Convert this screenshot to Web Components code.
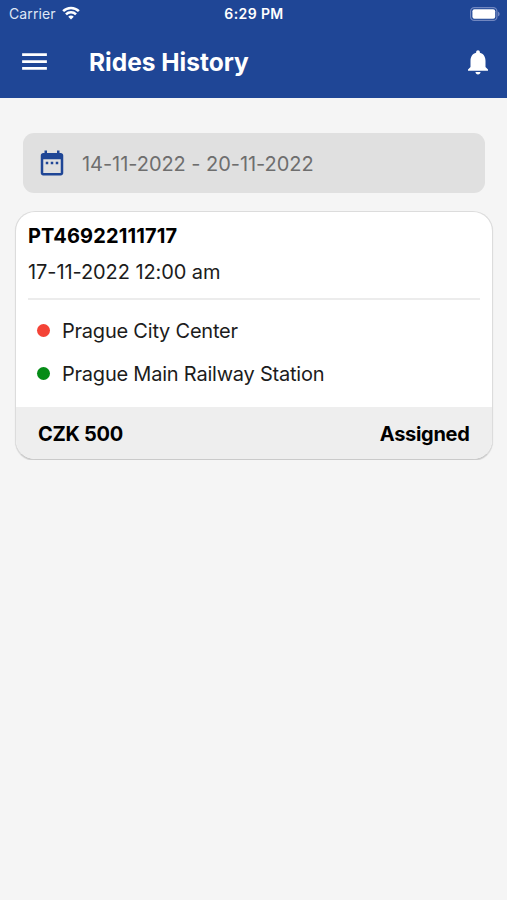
<!DOCTYPE html>
<html lang="en">
<head>
<meta charset="utf-8">
<meta name="viewport" content="width=device-width, initial-scale=1">
<title>Rides History</title>
<style>
	body {
		margin: 0;
		background: #f5f5f5;
		font-family: Inter, "Liberation Sans", sans-serif;
		color: #1c1c1c;
	}
	main {
		display: flex;
		flex-direction: column;
		gap: 18px;
		padding: 35px 14.5px 0 15px;
	}
</style>
</head>
<body>
	<status-bar time="6:29 PM">Carrier</status-bar>
	<app-bar>Rides History</app-bar>
	<main>
		<date-range>14-11-2022 - 20-11-2022</date-range>
		<ride-card>
			<span slot="number">PT46922111717</span>
			<span slot="date">17-11-2022 12:00 am</span>
			<ride-stop slot="stops" color="#f44336">Prague City Center</ride-stop>
			<ride-stop slot="stops" color="#058c17">Prague Main Railway Station</ride-stop>
			<span slot="price">CZK 500</span>
			<span slot="status">Assigned</span>
		</ride-card>
	</main>

<script>
(function() {
	function define(name, html, setup) {
		let template = document.createElement("template");
		template.innerHTML = html;

		customElements.define(name, class extends HTMLElement {
			constructor() {
				super();
				this._shadowRoot = this.attachShadow({mode: "open"});
				this._shadowRoot.appendChild(template.content.cloneNode(true));
				if (setup) {
					setup(this, this._shadowRoot);
				}
			}
		});
	}

	define("status-bar", `
		<style>
		:host {
			display: grid;
			grid-template-columns: 1fr auto 1fr;
			align-items: center;
			height: 27px;
			padding: 0 7px 0 9px;
			background: #1f4696;
			color: #fff;
			font-size: 14px;
			line-height: 27px;
		}
		.carrier {
			display: flex;
			align-items: center;
			gap: 6px;
			color: #dfe6f5;
			letter-spacing: 0.1px;
		}
		.time {
			margin-right: 1px;
			font-size: 14px;
			font-weight: 600;
			letter-spacing: 0.4px;
		}
		svg { display: block; }
		.carrier svg { margin-top: -1px; }
		.battery { justify-self: end; }
		</style>
		<div class="carrier">
			<slot></slot>
			<svg width="18" height="14" viewBox="0 0 19 14" fill="none" stroke="#fff" stroke-width="2.7">
				<path d="M1.2 5.1a11.8 11.8 0 0 1 16.6 0"/>
				<path d="M4.2 8.5a7.5 7.5 0 0 1 10.6 0"/>
				<path d="M9.5 13.9 6.6 11a4 4 0 0 1 5.8 0z" fill="#fff" stroke="none"/>
			</svg>
		</div>
		<span class="time"></span>
		<svg class="battery" width="30" height="14" viewBox="0 0 30 14">
			<rect x=".6" y=".6" width="26.3" height="12.8" rx="3.7" fill="none" stroke="#7187c0" stroke-width="1.2"/>
			<rect x="2.4" y="2.3" width="22.8" height="9.4" rx="2" fill="#fff"/>
			<path d="M28 4.7c2.2.7 2.2 3.9 0 4.6z" fill="#7187c0"/>
		</svg>
	`, (host, root) => {
		root.querySelector(".time").textContent = host.getAttribute("time");
	});

	define("app-bar", `
		<style>
		:host {
			display: flex;
			align-items: center;
			box-sizing: border-box;
			height: 71px;
			padding: 0 14.5px 2px 18px;
			background: #1f4696;
			color: #fff;
		}
		h1 {
			flex: 1;
			margin: 1px 0 0 38px;
			font-size: 24.5px;
			line-height: 32px;
			font-weight: 700;
		}
		svg { display: block; fill: #fff; }
		</style>
		<svg width="33" height="33" viewBox="0 0 24 24"><path d="M3 18h18v-2H3v2zm0-5h18v-2H3v2zm0-7v2h18V6H3z"/></svg>
		<h1><slot></slot></h1>
		<svg width="30" height="30" viewBox="0 0 24 24"><path d="M12 22c1.1 0 2-.9 2-2h-4c0 1.1.89 2 2 2zm6-6v-5c0-3.07-1.64-5.64-4.5-6.32V4c0-.83-.67-1.5-1.5-1.5s-1.5.67-1.5 1.5v.68C7.63 5.36 6 7.92 6 11v5l-2 2v1h16v-1l-2-2z"/></svg>
	`);

	define("date-range", `
		<style>
		:host {
			display: flex;
			align-items: center;
			gap: 15px;
			box-sizing: border-box;
			height: 60px;
			margin: 0 7.5px 0 8px;
			padding: 0 14px;
			border-radius: 11px;
			background: #e0e0e0;
			color: #6e6e6e;
			font-size: 20px;
			letter-spacing: -0.05px;
		}
		svg { display: block; fill: #1f4696; }
		span { padding-top: 1px; }
		</style>
		<svg width="30" height="30" viewBox="0 0 24 24"><path d="M9 11H7v2h2v-2zm4 0h-2v2h2v-2zm4 0h-2v2h2v-2zm2-7h-1V2h-2v2H8V2H6v2H5c-1.11 0-1.99.9-1.99 2L3 20c0 1.1.89 2 2 2h14c1.1 0 2-.9 2-2V6c0-1.1-.9-2-2-2zm0 16H5V9h14v11z"/></svg>
		<span><slot></slot></span>
	`);

	define("ride-stop", `
		<style>
		:host {
			display: flex;
			align-items: center;
			gap: 12px;
			height: 43px;
			letter-spacing: -0.22px;
		}
		i {
			width: 13px;
			height: 13px;
			margin-top: -1px;
			border-radius: 50%;
		}
		</style>
		<i></i>
		<span><slot></slot></span>
	`, (host, root) => {
		root.querySelector("i").style.background = host.getAttribute("color");
	});

	define("ride-card", `
		<style>
		:host {
			display: block;
			box-sizing: border-box;
			height: 249px;
			overflow: hidden;
			border: 1px solid #dcdcdc;
			border-bottom-color: #cacaca;
			border-radius: 20px;
			background: #fff;
			box-shadow: 0 1px 1px rgba(0, 0, 0, 0.14);
			font-size: 20px;
		}
		.head {
			margin: 0 12px;
			padding-top: 7px;
			border-bottom: 2px solid #ececec;
			height: 79px;
			line-height: 35px;
			letter-spacing: -0.08px;
		}
		.number, .foot {
			color: #000;
			font-weight: 700;
		}
		.number { letter-spacing: 0.15px; }
		.date { padding-top: 1px; }
		.stops {
			height: 107px;
			padding: 9px 21px 0;
			box-sizing: border-box;
		}
		.foot {
			display: flex;
			justify-content: space-between;
			height: 52px;
			padding: 0 22px;
			background: #eee;
			line-height: 54px;
			letter-spacing: -0.3px;
		}
		</style>
		<div class="head">
			<div class="number"><slot name="number"></slot></div>
			<div class="date"><slot name="date"></slot></div>
		</div>
		<div class="stops"><slot name="stops"></slot></div>
		<div class="foot">
			<slot name="price"></slot>
			<slot name="status"></slot>
		</div>
	`);
})();
</script>
</body>
</html>
